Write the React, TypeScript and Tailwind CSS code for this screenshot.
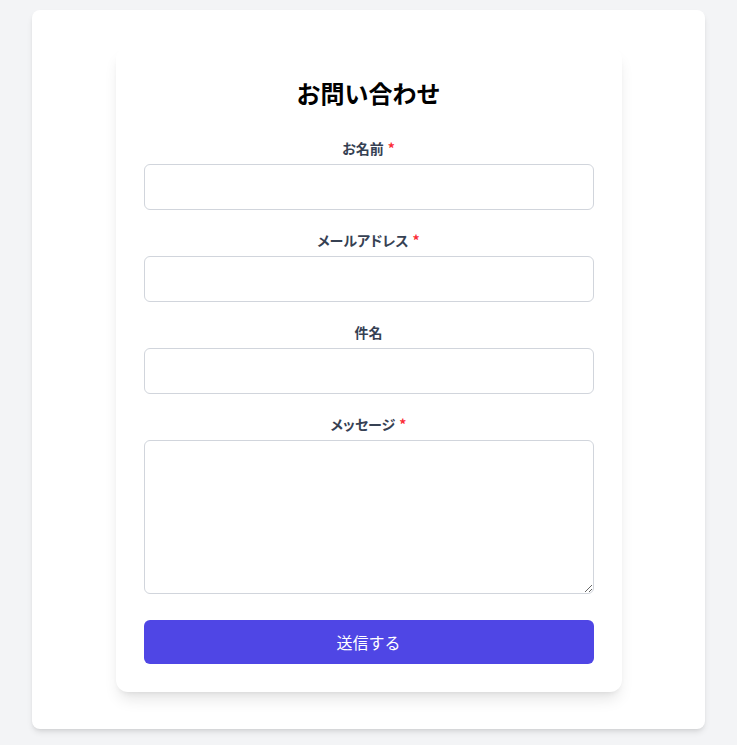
import React from "react";

const font = { fontFamily: '"Noto Sans CJK JP", "Noto Sans", sans-serif' };

function Field({ label, required, children }: { label: string; required?: boolean; children: React.ReactNode }) {
  return (
    <div className="mb-5 flex flex-col">
      <label className="mb-1.5 block text-center text-sm font-semibold leading-5 text-gray-700 [font-feature-settings:'palt']">
        {label}
        {required && <span className="ml-1 text-red-500">*</span>}
      </label>
      {children}
    </div>
  );
}

export default function App() {
  return (
    <div className="min-h-[745px] bg-gray-100 pt-[10px]" style={font}>
      <div className="mx-auto w-[673px] rounded-lg bg-white py-[37px] shadow-md">
        <div className="mx-auto w-[506px] rounded-xl bg-white px-7 pb-7 pt-[30px] shadow-lg">
          <h2 className="mb-[29px] text-center text-2xl font-bold leading-8 text-black">お問い合わせ</h2>
          <form>
            <Field label="お名前" required>
              <input type="text" className="h-[46px] w-full rounded-md border border-gray-300 px-3 outline-none" />
            </Field>
            <Field label="メールアドレス" required>
              <input type="email" className="h-[46px] w-full rounded-md border border-gray-300 px-3 outline-none" />
            </Field>
            <Field label="件名">
              <input type="text" className="h-[46px] w-full rounded-md border border-gray-300 px-3 outline-none" />
            </Field>
            <div className="mb-[26px] flex flex-col">
              <label className="mb-1.5 block text-center text-sm font-semibold leading-5 text-gray-700 [font-feature-settings:'palt']">
                メッセージ<span className="ml-1 text-red-500">*</span>
              </label>
              <textarea className="block h-[154px] w-full rounded-md border border-gray-300 px-3 py-2 outline-none" />
            </div>
            <button type="button" className="h-11 w-full rounded-md bg-[#4f46e5] text-base text-white">
              送信する
            </button>
          </form>
        </div>
      </div>
    </div>
  );
}
